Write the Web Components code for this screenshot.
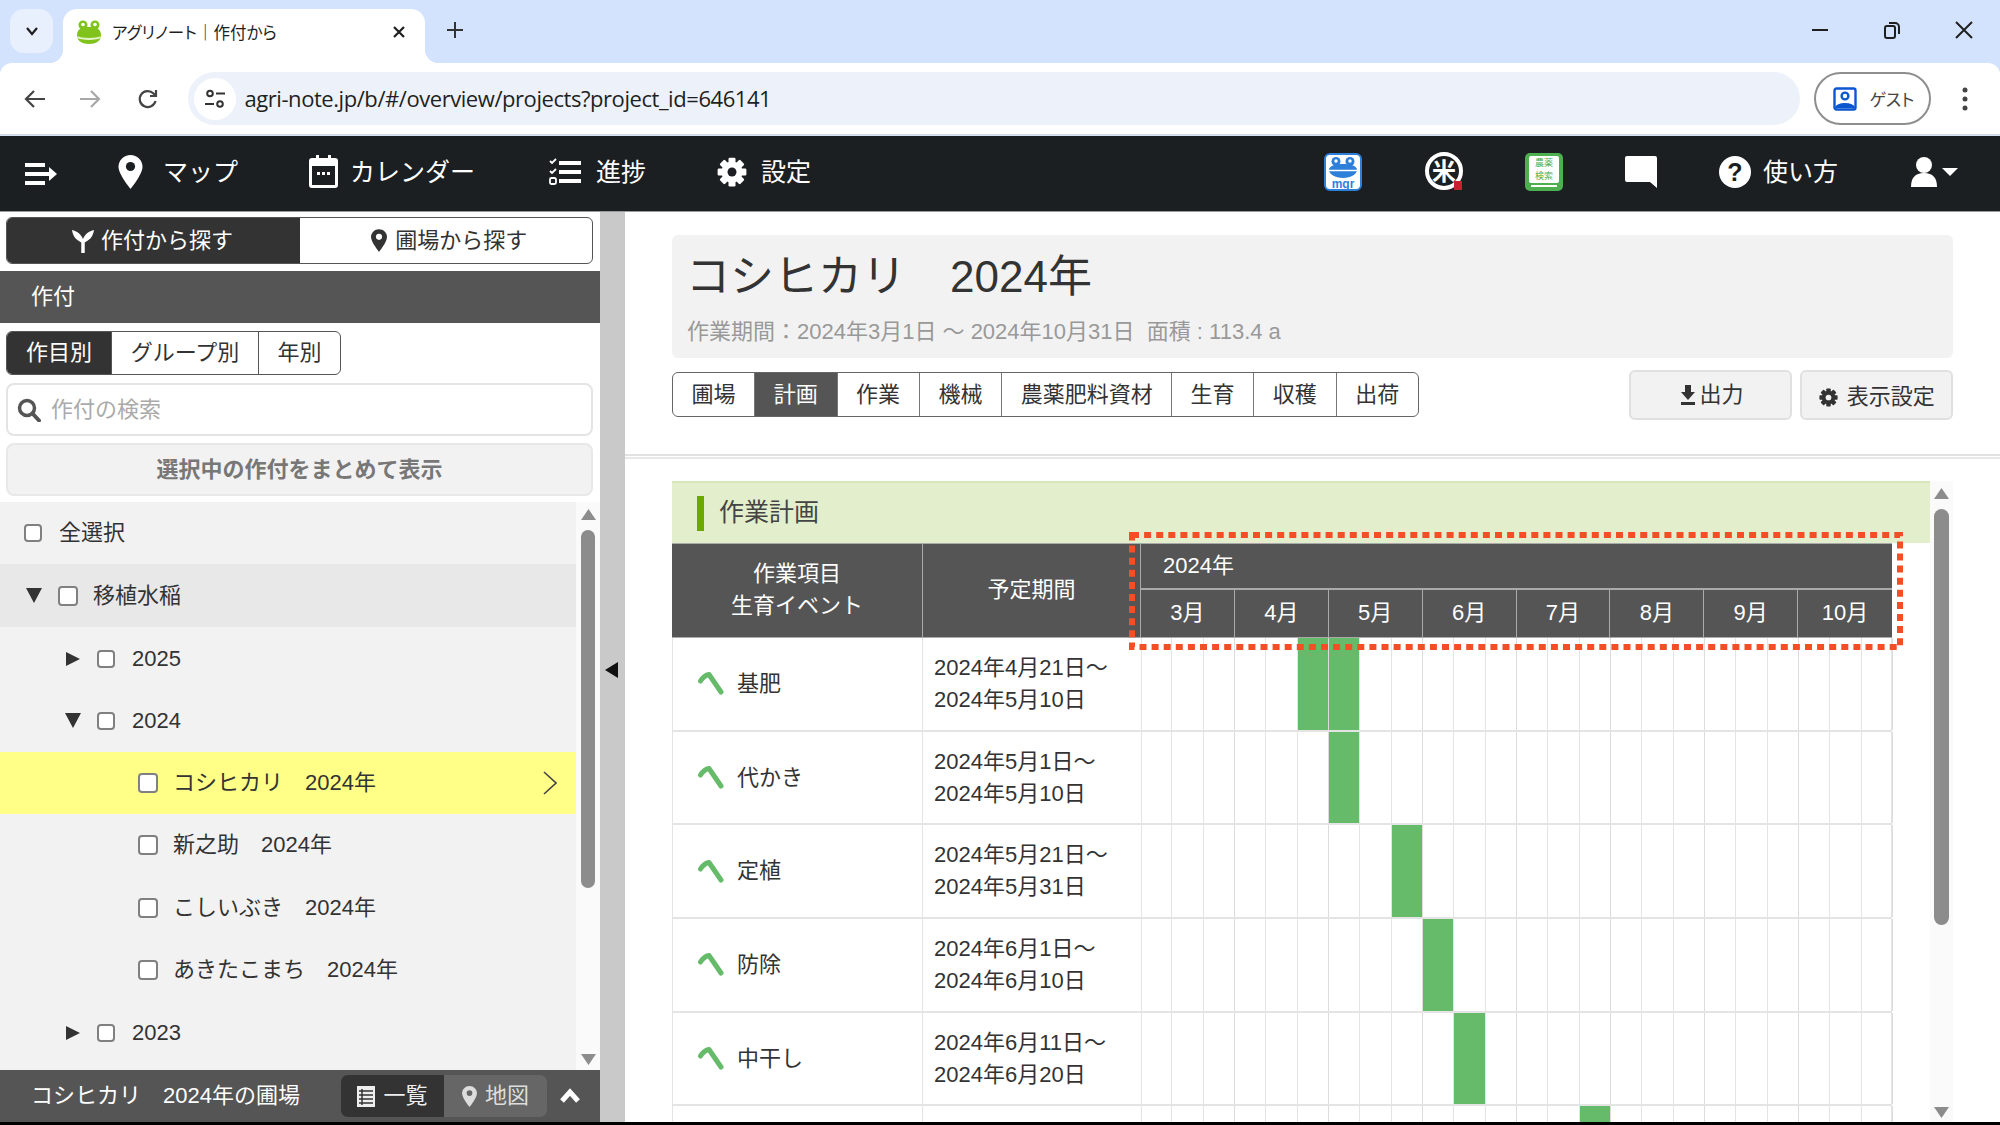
<!DOCTYPE html>
<html lang="ja">
<head>
<meta charset="utf-8">
<title>アグリノート</title>
<style>
  html, body {
    margin: 0;
    padding: 0;
    width: 2000px;
    height: 1125px;
    overflow: hidden;
    background: #000;
    font-family: "Liberation Sans", "Noto Sans CJK JP", sans-serif;
    color: #333;
    line-height: 30px;
  }
  #page {
    display: flex;
    flex-direction: column;
    width: 2000px;
    height: 1122px;
    background: #fff;
  }
  #main {
    display: flex;
    height: 910px;
  }
</style>
</head>
<body>
<div id="page">
  <browser-bar></browser-bar>
  <app-nav></app-nav>
  <div id="main">
    <crop-panel>
      <crop-row kind="all" size="18">全選択</crop-row>
      <crop-row kind="open" tone="group" size="20">移植水稲</crop-row>
      <crop-row kind="closed" level="1" size="18">2025</crop-row>
      <crop-row kind="open" level="1" size="18">2024</crop-row>
      <crop-row kind="leaf" tone="active" size="20">コシヒカリ　2024年</crop-row>
      <crop-row kind="leaf" size="20">新之助　2024年</crop-row>
      <crop-row kind="leaf" size="20">こしいぶき　2024年</crop-row>
      <crop-row kind="leaf" size="20">あきたこまち　2024年</crop-row>
      <crop-row kind="closed" level="1" size="18">2023</crop-row>
    </crop-panel>
    <panel-gutter></panel-gutter>
    <project-view></project-view>
  </div>
</div>

<script>
const gearIcon = (size, fill, hole) => {
  let teeth = '';
  for (let a = 0; a < 360; a += 45) {
    teeth += `<rect x="9.2" y="0.5" width="5.6" height="6" rx="1" fill="${fill}" transform="rotate(${a} 12 12)"/>`;
  }
  return `<svg width="${size}" height="${size}" viewBox="0 0 24 24">${teeth}<circle cx="12" cy="12" r="8.4" fill="${fill}"/><circle cx="12" cy="12" r="3.6" fill="${hole}"/></svg>`;
};

const pinIcon = (w, h, fill, hole) => `<svg width="${w}" height="${h}" viewBox="0 0 24 34"><path d="M12 0C5.4 0 0 5.3 0 11.8 0 19.5 12 34 12 34s12-14.500 12-22.200C24 5.300 18.600 0 12 0z" fill="${fill}"/><circle cx="12" cy="11.500" r="4.600" fill="${hole}"/></svg>`;

class BrowserBar extends HTMLElement {
  constructor() {
    super();
    this.shadowDOM = this.attachShadow({mode: 'open'});
  }

  connectedCallback() {
    this.shadowDOM.innerHTML = `
      <style>
        * { box-sizing: border-box; }
        :host {
          display: block;
          height: 136px;
          background: #d3e3fd;
          font-family: "Noto Sans CJK JP", sans-serif;
          color: #1f1f1f;
        }
        .strip { display: flex; height: 63px; position: relative; }
        .pill {
          width: 43px; height: 44px; margin: 9px 0 0 10px;
          background: #e8f0fe; border-radius: 14px;
          display: flex; align-items: center; justify-content: center;
        }
        .tab {
          position: relative;
          width: 362px; height: 54px; margin: 9px 0 0 10px;
          background: #fff; border-radius: 14px 14px 0 0;
          display: flex; align-items: center;
          padding: 0 0 8px 13px;
        }
        .tab::before, .tab::after {
          content: ""; position: absolute; bottom: 0; width: 14px; height: 14px;
        }
        .tab::before { left: -14px; background: radial-gradient(circle at 0 0, transparent 14px, #fff 14.500px); }
        .tab::after { right: -14px; background: radial-gradient(circle at 100% 0, transparent 14px, #fff 14.500px); }
        .tab-title {
          margin-left: 10px; width: 280px;
          font-size: 16.500px; font-feature-settings: "palt";
          white-space: pre;
        }
        .plus { margin: 21px 0 0 21px; }
        .win { margin-left: auto; display: flex; align-items: center; padding: 0 26px 3px 0; gap: 52px; height: 63px; }
        .tools {
          display: flex; align-items: center; height: 72px;
          background: #fff; border-radius: 12px 12px 0 0;
          border-bottom: 1px solid #d8d8d8;
          padding-left: 24px;
        }
        .nav-btn { width: 22px; height: 22px; margin-right: 33px; display: block; }
        .nav-btn:nth-child(2) { margin-right: 35.500px; }
        .nav-btn:nth-child(3) { margin-right: 29px; }
        .omni {
          width: 1612px; height: 53px; background: #edf2fa; border-radius: 27px;
          display: flex; align-items: center; padding-left: 6px;
        }
        .site {
          width: 42px; height: 42px; border-radius: 50%; background: #fff;
          display: flex; align-items: center; justify-content: center;
        }
        .url {
          margin: 0 0 2px 9px;
          font: 22px/30px "Open Sans", Roboto, sans-serif; color: #1f1f1f; letter-spacing: -0.440px;
        }
        .guest {
          margin-left: 14px; width: 117px; height: 53px;
          border: 2px solid #8e8e8e; border-radius: 27px; background: #fff;
          display: flex; align-items: center; padding-left: 17px; gap: 13px;
          font-size: 17px; font-feature-settings: "palt"; color: #444;
        }
        .dots { margin-left: 31px; display: block; }
      </style>
      <div class="strip">
        <div class="pill">
          <svg width="16" height="12" viewBox="0 0 16 12"><path d="M3 3l5 6 5-6" fill="none" stroke="#1f1f1f" stroke-width="2.200"/></svg>
        </div>
        <div class="tab">
          <svg width="26" height="26" viewBox="0 0 26 26">
            <circle cx="7" cy="6" r="4.500" fill="#7fc31c"/><circle cx="19" cy="6" r="4.500" fill="#7fc31c"/>
            <circle cx="7" cy="5.500" r="1.800" fill="#fff"/><circle cx="19" cy="5.500" r="1.800" fill="#fff"/>
            <path d="M1 16C1 10 6 8 13 8s12 2 12 8c0 6-5 9-12 9S1 22 1 16z" fill="#7fc31c"/>
            <path d="M1.500 18c4 2.500 19 2.500 23 0" fill="none" stroke="#e4f3c8" stroke-width="2"/>
          </svg>
          <span class="tab-title">アグリノート｜作付から</span>
          <svg width="14" height="14" viewBox="0 0 14 14"><path d="M2 2l10 10M12 2L2 12" stroke="#1f1f1f" stroke-width="2.200"/></svg>
        </div>
        <svg class="plus" width="18" height="18" viewBox="0 0 18 18"><path d="M9 1v16M1 9h16" stroke="#333" stroke-width="2"/></svg>
        <div class="win">
          <svg width="20" height="20" viewBox="0 0 20 20"><path d="M2 10h16" stroke="#1f1f1f" stroke-width="2"/></svg>
          <svg width="20" height="20" viewBox="0 0 20 20"><rect x="3" y="6" width="10" height="12" rx="2" fill="none" stroke="#1f1f1f" stroke-width="2"/><path d="M7 3h6a4 4 0 0 1 4 4v7" fill="none" stroke="#1f1f1f" stroke-width="2"/></svg>
          <svg width="20" height="20" viewBox="0 0 20 20"><path d="M2 2l16 16M18 2L2 18" stroke="#1f1f1f" stroke-width="2"/></svg>
        </div>
      </div>
      <div class="tools">
        <svg class="nav-btn" viewBox="0 0 22 22"><path d="M21 11H3M10 3l-8 8 8 8" fill="none" stroke="#444" stroke-width="2.200"/></svg>
        <svg class="nav-btn" viewBox="0 0 22 22"><path d="M1 11h18M12 3l8 8-8 8" fill="none" stroke="#a8a8a8" stroke-width="2.200"/></svg>
        <svg class="nav-btn" viewBox="0 0 22 22"><path d="M18.500 13a8 8 0 1 1-2-7.500L19 8M19 2v6h-6" fill="none" stroke="#444" stroke-width="2.200"/></svg>
        <div class="omni">
          <div class="site">
            <svg width="22" height="22" viewBox="0 0 22 22" fill="none" stroke="#333" stroke-width="2"><circle cx="6" cy="5.500" r="2.800"/><path d="M12 5.500h9M1 16h9"/><circle cx="16" cy="16" r="2.800"/></svg>
          </div>
          <span class="url">agri-note.jp/b/#/overview/projects?project_id=646141</span>
        </div>
        <div class="guest">
          <svg width="24" height="24" viewBox="0 0 24 24" fill="none" stroke="#0b57d0" stroke-width="2.400"><rect x="1.500" y="1.500" width="21" height="21" rx="2"/><circle cx="12" cy="9" r="3.400"/><path d="M3 21c2-5 16-5 18 0" fill="#0b57d0"/></svg>
          <span>ゲスト</span>
        </div>
        <svg class="dots" width="6" height="24" viewBox="0 0 6 24" fill="#444"><circle cx="3" cy="3" r="2.500"/><circle cx="3" cy="12" r="2.500"/><circle cx="3" cy="21" r="2.500"/></svg>
      </div>
    `;
  }
}

class NavItem extends HTMLElement {
  constructor() {
    super();
    this.shadowDOM = this.attachShadow({mode: 'open'});
    this.shadowDOM.innerHTML = `
      <style>
        :host {
          display: flex; align-items: center;
          gap: var(--nav-gap, 15px);
          font-size: 25px; color: #fff;
        }
      </style>
      <slot name="icon"></slot><slot></slot>
    `;
  }
}

class AppNav extends HTMLElement {
  constructor() {
    super();
    this.shadowDOM = this.attachShadow({mode: 'open'});
  }

  connectedCallback() {
    const dark = '#1c1f22';
    this.shadowDOM.innerHTML = `
      <style>
        :host {
          display: block; height: 76px;
          background: ${dark};
          border-bottom: 1px solid #9a9a9a;
          box-sizing: border-box;
          font-family: "Liberation Sans", "Noto Sans CJK JP", sans-serif;
        }
        nav { display: flex; align-items: center; height: 71px; padding-left: 25px; }
        svg { display: block; }
        nav-item span { display: block; }
        .right { margin-left: auto; display: flex; align-items: center; padding-right: 42px; }
      </style>
      <nav>
        <svg style="margin-top:5px" width="32" height="24" viewBox="0 0 32 24" fill="#fff"><path d="M0 1h20v4H0zM0 10h24V5l8 7-8 7v-5H0zM0 19h20v4H0z"/></svg>
        <nav-item style="margin-left:61px;--nav-gap:20px">
          <span slot="icon">${pinIcon(25, 34, '#fff', dark)}</span>マップ
        </nav-item>
        <nav-item style="margin-left:71px;--nav-gap:12px">
          <svg slot="icon" width="29" height="33" viewBox="0 0 29 33"><path d="M7 0h3v3h9V0h3v3h4a3 3 0 0 1 3 3v24a3 3 0 0 1-3 3H3a3 3 0 0 1-3-3V6a3 3 0 0 1 3-3h4z" fill="#fff"/><rect x="3" y="11" width="23" height="19" fill="${dark}"/><g fill="#fff"><rect x="8" y="17" width="3" height="3"/><rect x="13" y="17" width="3" height="3"/><rect x="18" y="17" width="3" height="3"/></g></svg>
          カレンダー
        </nav-item>
        <nav-item style="margin-left:74px;--nav-gap:15px">
          <svg slot="icon" width="32" height="28" viewBox="0 0 32 28" fill="#fff"><path d="M10 3h22v4H10zM10 12h22v4H10zM10 21h22v4H10z"/><path d="M1 3l2 2 4-4M1 13l2 2 4-4" fill="none" stroke="#fff" stroke-width="1.800"/><rect x="1" y="20" width="6" height="6" rx="1.500" fill="none" stroke="#fff" stroke-width="1.800"/></svg>
          進捗
        </nav-item>
        <nav-item style="margin-left:71px;--nav-gap:14px">
          <span slot="icon">${gearIcon(30, '#fff', dark)}</span>設定
        </nav-item>
        <div class="right">
          <svg width="38" height="38" viewBox="0 0 38 38">
            <rect x="1" y="1" width="36" height="36" rx="5" fill="#fff" stroke="#2e7fd9" stroke-width="2"/>
            <g fill="#2e7fd9"><circle cx="12" cy="8.500" r="4.500"/><circle cx="26" cy="8.500" r="4.500"/><path d="M5 17c0-4 6-6 14-6s14 2 14 6-6 8-14 8-14-4-14-8z"/></g>
            <circle cx="12" cy="8" r="1.700" fill="#fff"/><circle cx="26" cy="8" r="1.700" fill="#fff"/>
            <path d="M5 17.500h28" stroke="#fff" stroke-width="1.500"/>
            <text x="19" y="35" text-anchor="middle" font-family="Liberation Sans" font-size="12" font-weight="bold" fill="#2e7fd9">mgr</text>
          </svg>
          <svg style="margin-left:63px" width="40" height="40" viewBox="0 0 40 40">
            <circle cx="19" cy="19" r="17" fill="#1c1f22" stroke="#fff" stroke-width="4"/>
            <text x="19" y="28" text-anchor="middle" font-family="Noto Sans CJK JP" font-size="24" font-weight="bold" fill="#fff">米</text>
            <rect x="29" y="29" width="8" height="9" fill="#c8202f"/>
          </svg>
          <svg style="margin-left:60px" width="38" height="38" viewBox="0 0 38 38">
            <rect width="38" height="38" rx="5" fill="#4caf50"/>
            <rect x="4" y="3" width="30" height="27" rx="2" fill="#fff"/>
            <text x="19" y="13" text-anchor="middle" font-family="Noto Sans CJK JP" font-size="9" fill="#4caf50">農薬</text>
            <text x="19" y="26" text-anchor="middle" font-family="Noto Sans CJK JP" font-size="9" fill="#4caf50">検索</text>
            <rect x="6" y="32" width="26" height="2" fill="#fff"/>
          </svg>
          <svg style="margin-left:62px" width="32" height="32" viewBox="0 0 32 32"><path d="M2 0h28a2 2 0 0 1 2 2v30l-7-6H2a2 2 0 0 1-2-2V2a2 2 0 0 1 2-2z" fill="#fff"/></svg>
          <nav-item style="margin-left:62px;--nav-gap:12px">
            <svg slot="icon" width="32" height="32" viewBox="0 0 32 32"><circle cx="16" cy="16" r="16" fill="#fff"/><text x="16" y="25" text-anchor="middle" font-family="Liberation Sans" font-size="25" font-weight="bold" fill="${dark}">?</text></svg>
            使い方
          </nav-item>
          <svg style="margin-left:73px" width="47" height="30" viewBox="0 0 47 30" fill="#fff"><circle cx="13" cy="8" r="8"/><path d="M0 30c0-9 4-14 13-14s13 5 13 14z"/><path d="M31 11h16l-8 8z"/></svg>
        </div>
      </nav>
    `;
  }
}

class CropRow extends HTMLElement {
  constructor() {
    super();
    this.shadowDOM = this.attachShadow({mode: 'open'});
  }

  connectedCallback() {
    const kind = this.getAttribute('kind');
    const level = this.getAttribute('level') || '0';
    const size = Number(this.getAttribute('size') || '18');
    const tone = this.getAttribute('tone') || '';
    const left = kind === 'all' ? 24 : kind === 'leaf' ? 138 : level === '1' ? 65 : 26;
    const bg = tone === 'group' ? '#e8e8e8' : tone === 'active' ? '#ffff88' : 'transparent';
    let arrow = '';
    if (kind === 'open') {
      arrow = '<svg class="tri" width="16" height="16" viewBox="0 0 16 16"><path d="M0 0h16L8 15z" fill="#333"/></svg>';
    } else if (kind === 'closed') {
      arrow = '<svg class="tri" width="16" height="16" viewBox="0 0 16 16"><path d="M1 1l14 7-14 7z" fill="#333"/></svg>';
    }
    this.shadowDOM.innerHTML = `
      <style>
        :host {
          display: flex; align-items: center;
          height: 62.400px;
          padding-left: ${left}px;
          padding-top: ${level === '1' ? 2 : 0}px;
          box-sizing: border-box;
          background: ${bg};
          font-size: 22px; color: #333;
          position: relative;
        }
        .tri { margin-right: 16px; display: block; }
        .box {
          width: ${size}px; height: ${size}px; margin-right: ${size === 20 ? 15 : 17}px; flex: none;
          box-sizing: border-box;
          background: #fff; border: 2px solid #808080; border-radius: 4px;
        }
        .more { position: absolute; left: 543px; top: 19px; display: block; }
      </style>
      ${arrow}<span class="box"></span><slot></slot>
      ${tone === 'active' ? '<svg class="more" width="14" height="24" viewBox="0 0 14 24"><path d="M1 1l12 11L1 23" fill="none" stroke="#444" stroke-width="1.600"/></svg>' : ''}
    `;
  }
}

class MiniScroll extends HTMLElement {
  constructor() {
    super();
    this.shadowDOM = this.attachShadow({mode: 'open'});
  }

  connectedCallback() {
    const g = k => this.getAttribute(k);
    this.shadowDOM.innerHTML = `
      <style>
        :host {
          display: flex; flex-direction: column; align-items: center;
          flex: none;
          width: ${g('w')}px;
          background: #fafafa;
          padding: ${g('pad')}px 0 ${g('end')}px;
          box-sizing: border-box;
        }
        svg { display: block; flex: none; }
        .thumb {
          width: ${g('tw')}px; height: ${g('th')}px; margin-top: ${g('gap')}px;
          background: #8c8c8c; border-radius: 8px; flex: none;
        }
        .fill { flex: 1; }
      </style>
      <svg width="15" height="11" viewBox="0 0 15 11"><path d="M7.500 0L15 11H0z" fill="#8c8c8c"/></svg>
      <div class="thumb"></div>
      <div class="fill"></div>
      <svg width="15" height="11" viewBox="0 0 15 11"><path d="M0 0h15L7.500 11z" fill="#8c8c8c"/></svg>
    `;
  }
}

class CropPanel extends HTMLElement {
  constructor() {
    super();
    this.shadowDOM = this.attachShadow({mode: 'open'});
  }

  connectedCallback() {
    this.shadowDOM.innerHTML = `
      <style>
        * { box-sizing: border-box; }
        :host {
          display: flex; flex-direction: column; flex: none;
          width: 600px; height: 910px; background: #fff;
          font-size: 22px; color: #333;
        }
        .seg {
          display: flex; height: 47px; margin: 5px 7px 7px 6px;
          border: 1px solid #555; border-radius: 6px; overflow: hidden;
        }
        .seg div {
          display: flex; align-items: center; justify-content: center; gap: 7px;
        }
        .seg .on { flex: 0 0 293px; background: #333; color: #fff; padding-right: 2px; }
        .seg .off { flex: 1; padding-left: 6px; gap: 8.500px; }
        .title {
          height: 52px; background: #555; color: #fff;
          display: flex; align-items: center; padding-left: 31px;
        }
        .tabs {
          display: flex; width: 335px; height: 44px; margin: 8px 0 8px 6px;
          border: 1px solid #555; border-radius: 6px; overflow: hidden;
        }
        .tabs div { display: flex; align-items: center; justify-content: center; border-left: 1px solid #555; }
        .tabs div:first-child { border-left: 0; background: #333; color: #fff; }
        .search {
          height: 53px; margin: 0 7px 7px 6px;
          border: 2px solid #e4e4e4; border-radius: 8px;
          display: flex; align-items: center; padding-left: 9px; gap: 10px;
          color: #aaa;
        }
        .sum {
          height: 53px; margin: 0 7px 6px 6px;
          background: #f2f2f2; border: 2px solid #e8e8e8; border-radius: 8px;
          display: flex; align-items: center; justify-content: center;
          color: #777; font-weight: bold;
        }
        .list { display: flex; height: 568px; }
        .rows { width: 576px; background: #f2f2f2; overflow: hidden; }
        .foot {
          height: 52px; background: #555; color: #fff;
          display: flex; align-items: center; padding-left: 31px;
        }
        .foot .name { width: 310px; white-space: pre; }
        .switch { display: flex; height: 42px; border-radius: 7px; overflow: hidden; }
        .switch div { width: 103px; display: flex; align-items: center; justify-content: center; gap: 8px; }
        .switch .a { background: #333; color: #eee; }
        .switch .b { background: #666; color: #ddd; }
        .up { margin-left: 12px; display: block; }
      </style>
      <div class="seg">
        <div class="on">
          <svg width="22" height="24" viewBox="0 0 22 24"><path d="M11 24V13" stroke="#fff" stroke-width="3.500" fill="none"/><path d="M0 1c1 7 5 11 11 13 6-2 10-6 11-13-5 1-9 4-11 9C9 5 5 2 0 1z" fill="#fff"/></svg>
          <span>作付から探す</span>
        </div>
        <div class="off">${pinIcon(16, 23, '#333', '#fff')}<span>圃場から探す</span></div>
      </div>
      <div class="title">作付</div>
      <div class="tabs">
        <div style="width:104px">作目別</div>
        <div style="width:147px">グループ別</div>
        <div style="flex:1">年別</div>
      </div>
      <div class="search">
        <svg width="24" height="24" viewBox="0 0 24 24"><circle cx="10" cy="10" r="7.500" fill="none" stroke="#555" stroke-width="3.500"/><path d="M15.500 15.500l6.500 7" stroke="#555" stroke-width="4" stroke-linecap="round"/></svg>
        <span>作付の検索</span>
      </div>
      <div class="sum">選択中の作付をまとめて表示</div>
      <div class="list">
        <div class="rows"><slot></slot></div>
        <mini-scroll w="24" pad="7" end="5" tw="14" th="358" gap="10"></mini-scroll>
      </div>
      <div class="foot">
        <span class="name">コシヒカリ　2024年の圃場</span>
        <div class="switch">
          <div class="a">
            <svg width="18" height="21" viewBox="0 0 18 21"><rect width="18" height="21" fill="#eee"/><path d="M2 5h14M2 9h14M2 13h14M2 17h14M5 3v16" stroke="#333" stroke-width="1.500"/></svg>
            <span>一覧</span>
          </div>
          <div class="b">${pinIcon(15, 21, '#ddd', '#666')}<span>地図</span></div>
        </div>
        <svg class="up" width="22" height="16" viewBox="0 0 22 16"><path d="M3 13l8-9 8 9" fill="none" stroke="#fff" stroke-width="5"/></svg>
      </div>
    `;
  }
}

class PanelGutter extends HTMLElement {
  constructor() {
    super();
    this.shadowDOM = this.attachShadow({mode: 'open'});
    this.shadowDOM.innerHTML = `
      <style>
        :host {
          display: flex; align-items: center; flex: none;
          width: 25px; background: #c9c9c9; padding-left: 5px; box-sizing: border-box;
        }
        svg { display: block; margin-top: 5px; }
      </style>
      <svg width="13" height="16" viewBox="0 0 13 16"><path d="M13 0v16L0 8z" fill="#111"/></svg>
    `;
  }
}

class DashFrame extends HTMLElement {
  constructor() {
    super();
    this.shadowDOM = this.attachShadow({mode: 'open'});
    this.shadowDOM.innerHTML = `
      <style>
        :host { display: block; position: absolute; left: 457px; top: 51px; width: 774px; height: 118px; }
        svg { display: block; }
      </style>
      <svg width="774" height="118" viewBox="0 0 774 118"><rect x="3" y="3" width="768" height="112" fill="none" stroke="#f44e26" stroke-width="6" stroke-dasharray="7 5.100"/></svg>
    `;
  }
}

class WorkPlan extends HTMLElement {
  constructor() {
    super();
    this.shadowDOM = this.attachShadow({mode: 'open'});
  }

  connectedCallback() {
    // start = index of first 10-day cell, from March
    const rows = [
      ['基肥', '2024年4月21日～', '2024年5月10日', 5, 2],
      ['代かき', '2024年5月1日～', '2024年5月10日', 6, 1],
      ['定植', '2024年5月21日～', '2024年5月31日', 8, 1],
      ['防除', '2024年6月1日～', '2024年6月10日', 9, 1],
      ['中干し', '2024年6月11日～', '2024年6月20日', 10, 1],
      ['', '', '', 14, 1],
    ];
    const months = ['3月', '4月', '5月', '6月', '7月', '8月', '9月', '10月'];
    const leaf = '<svg width="26" height="23" viewBox="0 0 26 23"><path d="M2.500 9C5 5 8 3 11 2.500L23 20" fill="none" stroke="#66bb6a" stroke-width="5" stroke-linecap="round" stroke-linejoin="round"/></svg>';
    const rowHtml = rows.map(r => {
      let cells = '';
      for (let i = 0; i < 24; i++) {
        const on = i >= r[3] && i < r[3] + r[4];
        cells += `<i class="${on ? 'on' : ''}"></i>`;
      }
      return `
        <div class="row">
          <div class="name">${r[0] ? leaf + '<span>' + r[0] + '</span>' : ''}</div>
          <div class="span">${r[1]}<br>${r[2]}</div>
          <div class="days">${cells}</div>
        </div>`;
    }).join('');
    this.shadowDOM.innerHTML = `
      <style>
        * { box-sizing: border-box; }
        :host {
          display: block; position: relative; flex: none;
          width: 1258px; height: 641px; overflow: hidden;
          font-size: 22px; color: #333;
        }
        .heading {
          height: 62px; background: #e3eecd;
          border-top: 2px solid #d6e6bd;
          display: flex; align-items: center; padding-left: 25px; gap: 15px;
          font-size: 25px; color: #444;
        }
        .heading span { margin-bottom: 2px; }
        .heading b { display: block; width: 7px; height: 35px; background: #6aa800; }
        .table { width: 1220px; }
        .head {
          display: grid; grid-template-columns: 251px 218px 751px; height: 95px;
          background: #555; color: #fff; text-align: center; line-height: 32px;
          border-top: 1px solid #aaa; border-bottom: 1px solid #aaa;
        }
        .head > div { display: flex; align-items: center; justify-content: center; border-right: 1px solid #aaa; padding-bottom: 2px; }
        .head > .cal { display: block; border-right: 0; padding-bottom: 0; }
        .year { height: 46px; line-height: 44px; text-align: left; padding-left: 22px; border-bottom: 2px solid #aaa; }
        .months { display: grid; grid-template-columns: repeat(8, 1fr); height: 47px; }
        .months div { line-height: 45px; border-right: 1px solid #aaa; }
        .months div:last-child { border-right: 0; }
        .row {
          display: grid; grid-template-columns: 250px 219px 751px; height: 93.700px;
          border-bottom: 2px solid #e4e4e4;
          border-right: 1px solid #e4e4e4;
          border-left: 1px solid #e4e4e4;
        }
        .name { display: flex; align-items: center; gap: 13px; padding-left: 25px; border-right: 1px solid #e4e4e4; }
        .span { display: flex; align-items: center; padding-left: 11px; line-height: 32px; border-right: 1px solid #e4e4e4; flex-wrap: wrap; align-content: center; }
        .days { display: grid; grid-template-columns: repeat(24, 1fr); margin-left: -1px; }
        .days i { display: block; border-right: 1px solid #e4e4e4; }
        .days i:nth-child(3n) { border-right-color: #dcdcdc; }
        .days i.on { background: #66bb6a; }
      </style>
      <div class="heading"><b></b><span>作業計画</span></div>
      <div class="table">
        <div class="head">
          <div>作業項目<br>生育イベント</div>
          <div>予定期間</div>
          <div class="cal">
            <div class="year">2024年</div>
            <div class="months">${months.map(m => `<div>${m}</div>`).join('')}</div>
          </div>
        </div>
        ${rowHtml}
      </div>
      <dash-frame></dash-frame>
    `;
  }
}

class ProjectView extends HTMLElement {
  constructor() {
    super();
    this.shadowDOM = this.attachShadow({mode: 'open'});
  }

  connectedCallback() {
    const tabs = [['圃場', 81], ['計画', 83], ['作業', 82], ['機械', 83], ['農薬肥料資材', 170], ['生育', 82], ['収穫', 83], ['出荷', 82]];
    this.shadowDOM.innerHTML = `
      <style>
        * { box-sizing: border-box; }
        :host {
          display: flex; flex-direction: column;
          flex: 1; min-width: 0; height: 910px; background: #fff;
          font-size: 22px; color: #333;
        }
        .top { height: 242px; padding: 23px 47px 0; }
        .card {
          height: 123px; background: #f2f2f2; border-radius: 6px;
          padding: 15px 0 0 14px;
        }
        h1 { margin: 0; font-size: 44px; font-weight: normal; line-height: 54px; color: #333; white-space: pre; }
        .sub { margin: 12px 0 0 1px; color: #999; line-height: 32px; white-space: pre; }
        .bar { display: flex; align-items: flex-start; margin-top: 12px; }
        .tabs {
          display: flex; height: 45px; margin-top: 2px;
          border: 1px solid #666; border-radius: 6px; overflow: hidden;
        }
        .tabs div { display: flex; align-items: center; justify-content: center; border-left: 1px solid #777; }
        .tabs div:first-child { border-left: 0; }
        .tabs .on { background: #555; color: #fff; }
        .btn {
          display: flex; align-items: center; justify-content: center; gap: 6px;
          height: 50px; background: #f2f2f2; border: 2px solid #e0e0e0; border-radius: 6px;
        }
        .btn svg { display: block; }
        .sep { height: 5px; border-top: 2px solid #e2e2e2; border-bottom: 2px solid #e8e8e8; }
        .work { display: flex; height: 663px; padding: 22px 0 0 47px; }
      </style>
      <div class="top">
        <div class="card">
          <h1>コシヒカリ　2024年</h1>
          <div class="sub">作業期間：2024年3月1日 ～ 2024年10月31日  面積 : 113.4 a</div>
        </div>
        <div class="bar">
          <div class="tabs">
            ${tabs.map((t, i) => `<div class="${i === 1 ? 'on' : ''}" style="width:${t[1]}px">${t[0]}</div>`).join('')}
          </div>
          <div class="btn" style="width:164px;margin-left:210px;padding:0 0 1px 3px;gap:3px">
            <svg width="16" height="20" viewBox="0 0 16 20" fill="#333"><path d="M5 0h6v7h4l-7 8-7-8h4zM1 17h14v3H1z"/></svg>
            <span>出力</span>
          </div>
          <div class="btn" style="width:153px;margin-left:8px;padding-top:4px;gap:9px">
            ${gearIcon(19, '#333', '#f2f2f2')}
            <span>表示設定</span>
          </div>
        </div>
      </div>
      <div class="sep"></div>
      <div class="work">
        <work-plan></work-plan>
        <mini-scroll w="23" pad="7" end="4" tw="15" th="416" gap="10"></mini-scroll>
      </div>
    `;
  }
}

customElements.define('browser-bar', BrowserBar);
customElements.define('nav-item', NavItem);
customElements.define('app-nav', AppNav);
customElements.define('crop-row', CropRow);
customElements.define('mini-scroll', MiniScroll);
customElements.define('crop-panel', CropPanel);
customElements.define('panel-gutter', PanelGutter);
customElements.define('dash-frame', DashFrame);
customElements.define('work-plan', WorkPlan);
customElements.define('project-view', ProjectView);
</script>
</body>
</html>
